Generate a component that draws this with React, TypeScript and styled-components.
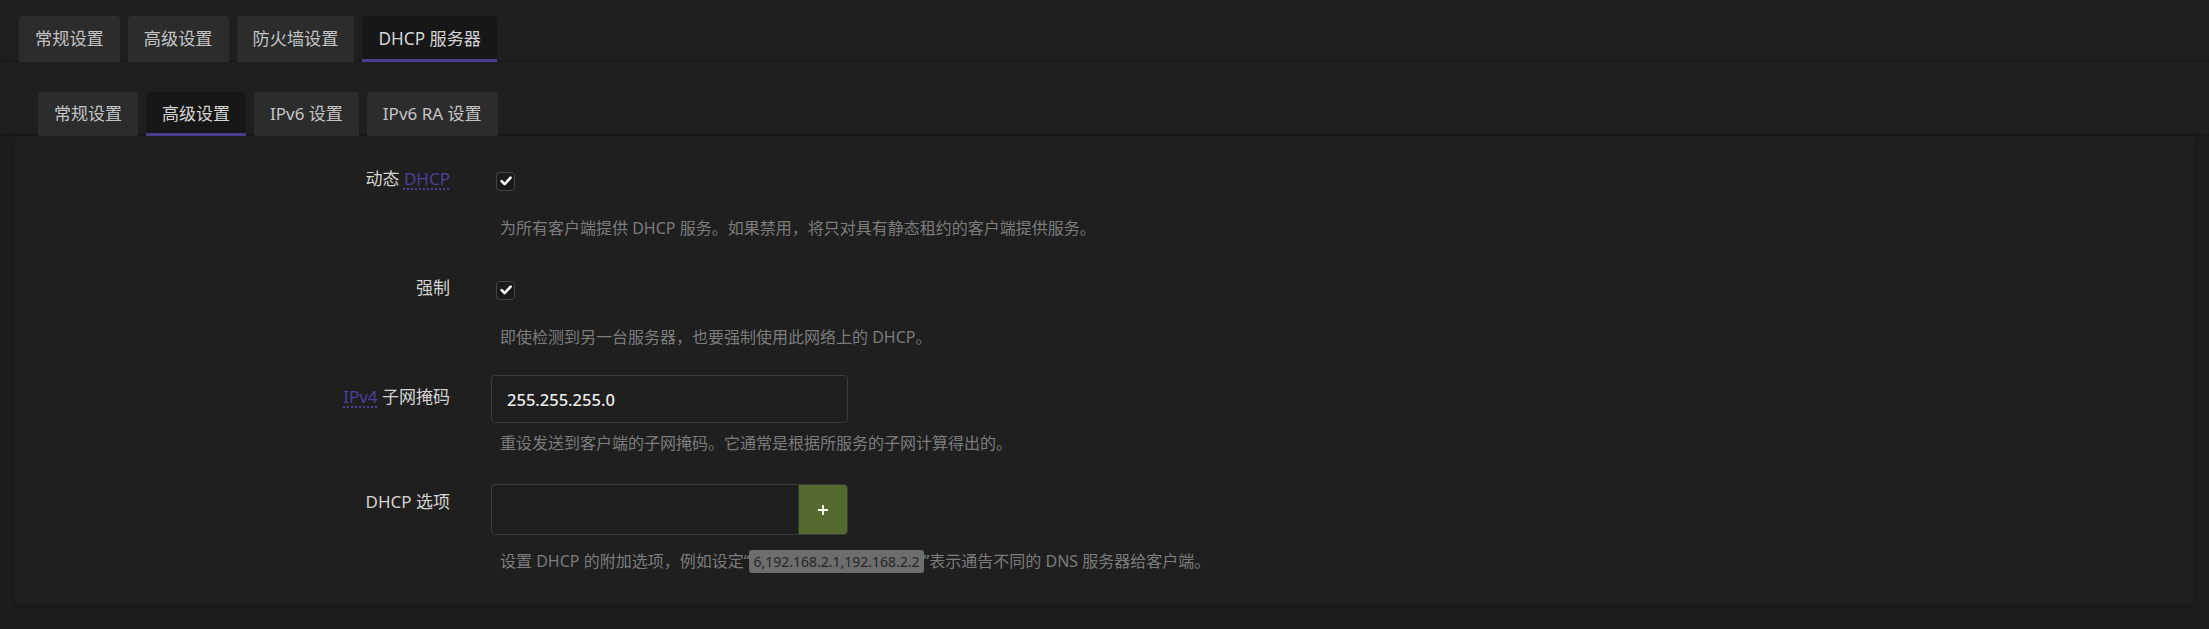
import React from "react";
import styled, { createGlobalStyle } from "styled-components";

const GlobalStyle = createGlobalStyle`
  html, body {
    margin: 0;
    padding: 0;
    background: #1d1d1d;
  }
  body {
    font-family: "Noto Sans", "Noto Sans CJK SC", sans-serif;
    color: #d2d2d2;
  }
  * { box-sizing: border-box; }
`;

const Page = styled.div`
  min-height: 629px;
  background: #1d1d1d;
`;

const TabBar = styled.div<{ $top: number; $left: number }>`
  display: flex;
  gap: 8px;
  padding: ${(p) => p.$top}px 0 0 ${(p) => p.$left}px;
  background: #1f1f1f;
  box-shadow: inset 0 -2px 2px -1px rgba(0, 0, 0, 0.35);
`;

const Tab = styled.div<{ $active?: boolean; $h: number; $fs: number }>`
  height: ${(p) => p.$h}px;
  line-height: ${(p) => p.$h - 1}px;
  padding: 0 16px;
  font-size: ${(p) => p.$fs}px;
  white-space: nowrap;
  border-radius: 4px 4px 0 0;
  color: ${(p) => (p.$active ? "#d4d4d4" : "#c4c4c4")};
  background: ${(p) => (p.$active ? "#171717" : "#2c2c2c")};
  box-shadow: ${(p) => (p.$active ? "inset 0 -3px 0 #4b3c8e" : "none")};
`;

const Panel = styled.div`
  margin: 0 15px;
  padding: 21px 0 12px;
  background: #1f1f1f;
  border-radius: 0 0 5px 5px;
  box-shadow: 0 2px 6px rgba(0, 0, 0, 0.3);
`;

const Row = styled.div`
  display: grid;
  grid-template-columns: 435px 1fr;
  column-gap: 41px;
  align-items: start;
  min-height: 109px;
`;

const Label = styled.div<{ $pt: number }>`
  padding-top: ${(p) => p.$pt}px;
  text-align: right;
  font-size: 17px;
  line-height: 24px;
  color: #d4d4d4;
  white-space: nowrap;
`;

const Abbr = styled.span`
  color: #4d3f9a;
  text-decoration: underline dotted #4d3f9a;
  text-decoration-thickness: 1.5px;
  text-underline-offset: 3px;
`;

const Control = styled.div`
  display: flex;
  flex-direction: column;
`;

const ControlLine = styled.div<{ $h: number }>`
  height: ${(p) => p.$h}px;
  display: flex;
  align-items: center;
`;

const CheckBox = styled.span`
  width: 19px;
  height: 19px;
  margin-left: 5px;
  border: 1px solid #454545;
  border-radius: 4px;
  background: #1a1a1a;
  display: inline-flex;
  align-items: center;
  justify-content: center;
`;

const TextInput = styled.div`
  width: 357px;
  height: 48px;
  border: 1px solid #3a3a3a;
  border-radius: 4px;
  background: #1e1e1e;
  padding: 0 15px;
  display: flex;
  align-items: center;
  font-size: 16.5px;
  font-weight: 500;
  color: #ececec;
`;

const InputGroup = styled.div`
  width: 357px;
  height: 51px;
  border: 1px solid #3a3a3a;
  border-radius: 4px;
  background: #1e1e1e;
  display: flex;
  overflow: hidden;
`;

const GroupField = styled.div`
  flex: 1;
`;

const AddButton = styled.div`
  width: 49px;
  background: #546b2f;
  border-left: 1px solid #2e3a1c;
  display: flex;
  align-items: center;
  justify-content: center;
`;

const Desc = styled.div<{ $mt: number }>`
  margin-top: ${(p) => p.$mt}px;
  padding-left: 9px;
  font-size: 16px;
  line-height: 24px;
  color: #7c7c7c;
  white-space: nowrap;
`;

const Code = styled.code`
  font-family: "Noto Sans", "Noto Sans CJK SC", sans-serif;
  font-size: 14px;
  display: inline-block;
  line-height: 23px;
  padding: 0 4px;
  border-radius: 3px;
  background: #6d6d6d;
  color: #262626;
  vertical-align: 0px;
`;

const Check = () => (
  <svg width="12" height="10" viewBox="0 0 12 10">
    <path
      d="M1.6 5.2 L4.6 8.2 L10.6 1.6"
      fill="none"
      stroke="#ffffff"
      strokeWidth="2.6"
      strokeLinecap="round"
      strokeLinejoin="round"
    />
  </svg>
);

const Plus = () => (
  <svg width="12" height="12" viewBox="0 0 12 12">
    <path d="M6 1 V11 M1 6 H11" stroke="#ffffff" strokeWidth="1.8" />
  </svg>
);

export default function App() {
  return (
    <Page>
      <GlobalStyle />
      <TabBar $top={16} $left={19}>
        <Tab $h={46} $fs={17.2}>常规设置</Tab>
        <Tab $h={46} $fs={17.2}>高级设置</Tab>
        <Tab $h={46} $fs={17.2}>防火墙设置</Tab>
        <Tab $h={46} $fs={17.2} $active>
          DHCP 服务器
        </Tab>
      </TabBar>
      <TabBar $top={30} $left={38}>
        <Tab $h={44} $fs={17}>常规设置</Tab>
        <Tab $h={44} $fs={17} $active>
          高级设置
        </Tab>
        <Tab $h={44} $fs={17}>IPv6 设置</Tab>
        <Tab $h={44} $fs={17}>IPv6 RA 设置</Tab>
      </TabBar>
      <Panel>
        <Row>
          <Label $pt={10}>
            动态 <Abbr>DHCP</Abbr>
          </Label>
          <Control>
            <ControlLine $h={48}>
              <CheckBox>
                <Check />
              </CheckBox>
            </ControlLine>
            <Desc $mt={11}>
              为所有客户端提供 DHCP 服务。如果禁用，将只对具有静态租约的客户端提供服务。
            </Desc>
          </Control>
        </Row>
        <Row>
          <Label $pt={10}>强制</Label>
          <Control>
            <ControlLine $h={48}>
              <CheckBox>
                <Check />
              </CheckBox>
            </ControlLine>
            <Desc $mt={11}>即使检测到另一台服务器，也要强制使用此网络上的 DHCP。</Desc>
          </Control>
        </Row>
        <Row>
          <Label $pt={10}>
            <Abbr>IPv4</Abbr> 子网掩码
          </Label>
          <Control>
            <TextInput>255.255.255.0</TextInput>
            <Desc $mt={8}>重设发送到客户端的子网掩码。它通常是根据所服务的子网计算得出的。</Desc>
          </Control>
        </Row>
        <Row>
          <Label $pt={6}>DHCP 选项</Label>
          <Control>
            <InputGroup>
              <GroupField />
              <AddButton>
                <Plus />
              </AddButton>
            </InputGroup>
            <Desc $mt={14}>
              设置 DHCP 的附加选项，例如设定“<Code>6,192.168.2.1,192.168.2.2</Code>”表示通告不同的 DNS 服务器给客户端。
            </Desc>
          </Control>
        </Row>
      </Panel>
    </Page>
  );
}
